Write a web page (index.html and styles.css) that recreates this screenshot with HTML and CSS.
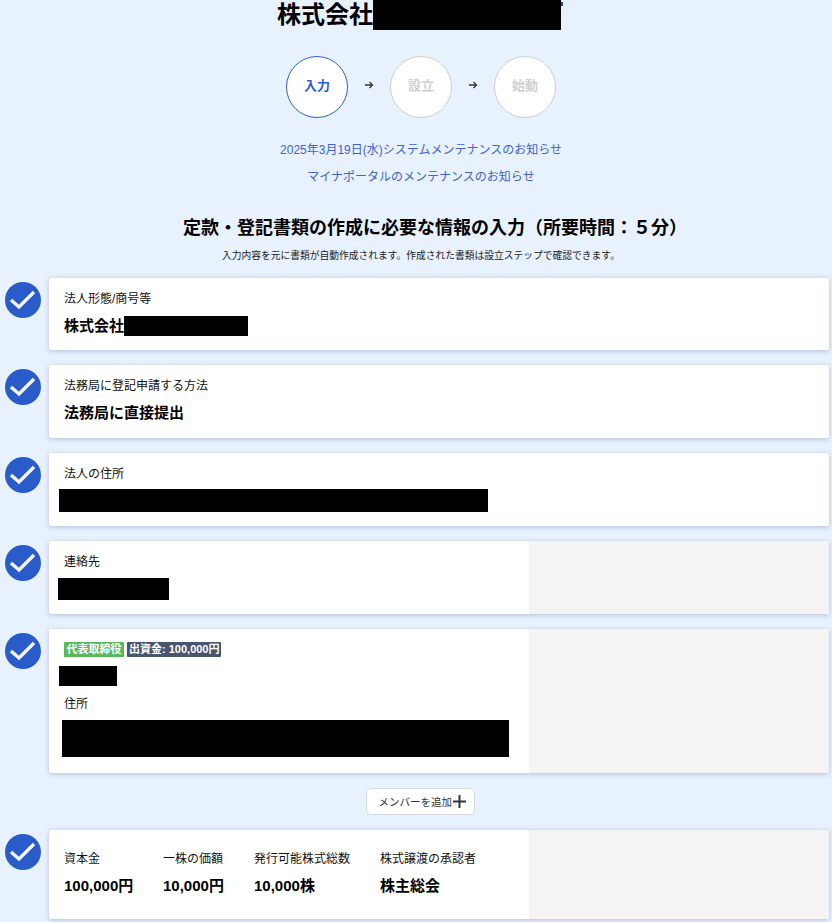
FILE: index.html
```html
<!DOCTYPE html>
<html lang="ja">
<head>
<meta charset="utf-8">
<title>定款・登記書類の作成</title>
<link rel="stylesheet" href="styles.css">
</head>
<body>
<header class="head">
  <h1 class="company">株式会社<span class="mask mask-title"></span></h1>
  <ol class="steps">
    <li class="step step-active">入力</li>
    <li class="arrow"><svg width="10" height="10" viewBox="0 0 10 10"><path d="M1 5h7.5M5.5 2l3 3-3 3" fill="none" stroke="#333" stroke-width="1.3"/></svg></li>
    <li class="step">設立</li>
    <li class="arrow"><svg width="10" height="10" viewBox="0 0 10 10"><path d="M1 5h7.5M5.5 2l3 3-3 3" fill="none" stroke="#333" stroke-width="1.3"/></svg></li>
    <li class="step">始動</li>
  </ol>
  <a class="notice notice-first">2025年3月19日(水)システムメンテナンスのお知らせ</a>
  <a class="notice">マイナポータルのメンテナンスのお知らせ</a>
  <h2 class="section-title">定款・登記書類の作成に必要な情報の入力（所要時間：５分）</h2>
  <p class="section-sub">入力内容を元に書類が自動作成されます。作成された書類は設立ステップで確認できます。</p>
</header>

<main class="rows">
  <section class="row">
    <svg class="check" viewBox="0 0 36 36"><circle cx="18" cy="18" r="18" fill="#2a5cc9"/><path d="M6 18l8 7L29 10" fill="none" stroke="#f2f5fd" stroke-width="3.4"/></svg>
    <div class="card card-72">
      <div class="body">
        <div class="label">法人形態/商号等</div>
        <div class="value">株式会社<span class="mask mask-name"></span></div>
      </div>
    </div>
  </section>
  <section class="row">
    <svg class="check" viewBox="0 0 36 36"><circle cx="18" cy="18" r="18" fill="#2a5cc9"/><path d="M6 18l8 7L29 10" fill="none" stroke="#f2f5fd" stroke-width="3.4"/></svg>
    <div class="card">
      <div class="body">
        <div class="label">法務局に登記申請する方法</div>
        <div class="value">法務局に直接提出</div>
      </div>
    </div>
  </section>
  <section class="row">
    <svg class="check" viewBox="0 0 36 36"><circle cx="18" cy="18" r="18" fill="#2a5cc9"/><path d="M6 18l8 7L29 10" fill="none" stroke="#f2f5fd" stroke-width="3.4"/></svg>
    <div class="card">
      <div class="body">
        <div class="label">法人の住所</div>
        <div class="mask mask-address"></div>
      </div>
    </div>
  </section>
  <section class="row">
    <svg class="check" viewBox="0 0 36 36"><circle cx="18" cy="18" r="18" fill="#2a5cc9"/><path d="M6 18l8 7L29 10" fill="none" stroke="#f2f5fd" stroke-width="3.4"/></svg>
    <div class="card">
      <div class="body body-half">
        <div class="label">連絡先</div>
        <div class="mask mask-contact"></div>
      </div>
      <div class="side"></div>
    </div>
  </section>
  <section class="row">
    <svg class="check" viewBox="0 0 36 36"><circle cx="18" cy="18" r="18" fill="#2a5cc9"/><path d="M6 18l8 7L29 10" fill="none" stroke="#f2f5fd" stroke-width="3.4"/></svg>
    <div class="card">
      <div class="body body-half body-person">
        <div class="badges"><span class="badge badge-green">代表取締役</span><span class="badge badge-slate">出資金: 100,000円</span></div>
        <div class="mask mask-person"></div>
        <div class="label label-sub">住所</div>
        <div class="mask mask-person-address"></div>
      </div>
      <div class="side"></div>
    </div>
  </section>
  <div class="add-wrap"><button class="add" type="button">メンバーを追加<svg width="13" height="13" viewBox="0 0 13 13"><path d="M6.5 0v13M0 6.5h13" stroke="#333" stroke-width="2"/></svg></button></div>
  <section class="row">
    <svg class="check" viewBox="0 0 36 36"><circle cx="18" cy="18" r="18" fill="#2a5cc9"/><path d="M6 18l8 7L29 10" fill="none" stroke="#f2f5fd" stroke-width="3.4"/></svg>
    <div class="card">
      <div class="body body-half body-columns">
        <div class="col col-a"><div class="label">資本金</div><div class="value">100,000円</div></div>
        <div class="col col-b"><div class="label">一株の価額</div><div class="value">10,000円</div></div>
        <div class="col col-c"><div class="label">発行可能株式総数</div><div class="value">10,000株</div></div>
        <div class="col"><div class="label">株式譲渡の承認者</div><div class="value">株主総会</div></div>
      </div>
      <div class="side"></div>
    </div>
  </section>
</main>
</body>
</html>
```

FILE: styles.css
```css
* { box-sizing: border-box; }
html, body { margin: 0; padding: 0; }
body {
  height: 922px;
  overflow: hidden;
  background: #e8f1fe;
  color: #000;
  font-family: "Liberation Sans", "Noto Sans CJK JP", sans-serif;
  font-size: 12px;
}
.head {
  display: flex;
  flex-direction: column;
  align-items: center;
  padding-left: 10px;
}
.company {
  display: flex;
  margin: 0;
  padding-right: 4px;
  height: 30px;
  font-size: 24px;
  line-height: 30px;
  font-weight: 700;
}
.mask { display: block; background: #000; }
.mask-title { position: relative; width: 188px; height: 30px; }
.mask-title::after {
  content: "";
  position: absolute;
  top: 2px;
  right: -2px;
  width: 2px;
  height: 4px;
  background: #1d3f86;
}
.steps {
  display: flex;
  align-items: center;
  list-style: none;
  margin: 26px 0 0;
  padding: 0;
}
.step {
  display: flex;
  align-items: center;
  justify-content: center;
  width: 62px;
  height: 62px;
  padding-bottom: 5px;
  border: 1px solid #cfcfcf;
  border-radius: 50%;
  background: #fff;
  color: #cfcfcf;
  font-size: 13px;
  font-weight: 700;
}
.step-active { border-color: #2b5fcf; color: #2b5fcf; }
.arrow { display: flex; width: 42px; justify-content: center; margin-top: -4px; }
.notice { display: block; margin-top: 9px; color: #3f63cf; font-size: 12px; line-height: 18px; }
.notice-first { margin-top: 23px; }
.section-title { margin: 30px 0 0 28px; font-size: 18px; line-height: 24px; font-weight: 700; }
.section-sub { margin: 9px 0 0; font-size: 9.75px; line-height: 14px; color: #222; }
.rows { display: flex; flex-direction: column; margin-top: 15px; }
.row { display: flex; align-items: flex-start; padding: 0 3px 0 5px; margin-bottom: 15px; }
.check { flex: none; width: 36px; height: 36px; margin: 4px 8px 0 0; }
.card {
  display: flex;
  flex: 1;
  min-height: 73px;
  background: #fff;
  border-radius: 2px;
  overflow: hidden;
  box-shadow: 0 1px 5px rgba(70, 85, 120, 0.32);
}
.card-72 { min-height: 72px; }
.body { flex: 1; padding: 13px 15px 0; }
.body-half { flex: none; width: 480px; }
.body-person { padding-bottom: 16px; }
.side { flex: 1; background: #f5f3f4; }
.label { font-size: 12px; line-height: 16px; color: #111; }
.value { display: flex; margin-top: 9px; font-size: 15px; line-height: 20px; font-weight: 700; }
.mask-name { width: 124px; height: 20px; }
.mask-address { width: 429px; height: 23px; margin: 7px 0 0 -5px; }
.mask-contact { width: 111px; height: 22px; margin: 8px 0 0 -6px; }
.badges { display: flex; gap: 3px; height: 15px; }
.badge { padding: 0 2.5px; border-radius: 1px; color: #fff; font-size: 11px; line-height: 15px; font-weight: 700; }
.badge-green { background: #5cb85c; }
.badge-slate { padding: 0 2px; background: #48566f; }
.mask-person { width: 58px; height: 20px; margin: 9px 0 0 -5px; }
.label-sub { margin-top: 10px; }
.mask-person-address { width: 447px; height: 37px; margin: 8px 0 0 -2px; }
.add-wrap { display: flex; justify-content: center; padding-left: 8px; margin-bottom: 15px; height: 27px; }
.add {
  display: flex;
  align-items: center;
  gap: 1px;
  width: 109px;
  height: 27px;
  padding: 0 0 0 12px;
  background: #fff;
  border: 1px solid #d5d9e0;
  border-radius: 5px;
  color: #333;
  font: inherit;
  font-size: 10.5px;
}
.body-columns { display: flex; padding-top: 21px; padding-bottom: 23px; }
.col-a { width: 99px; }
.col-b { width: 91px; }
.col-c { width: 126px; }
```
